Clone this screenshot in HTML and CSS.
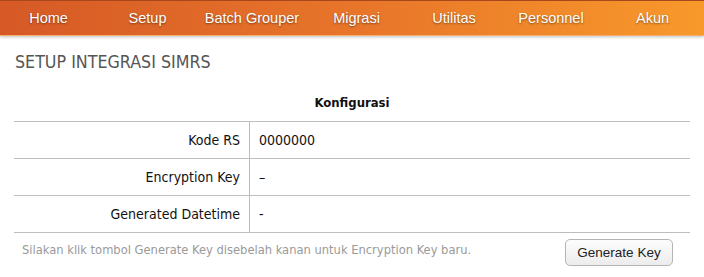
FILE: index.html
```html
<!DOCTYPE html>
<html lang="id">
<head>
<meta charset="UTF-8">
<meta name="viewport" content="width=device-width, initial-scale=1.0">
<title>Setup Integrasi SIMRS</title>
<link rel="stylesheet" href="styles.css">
</head>
<body>

<ul class="menu">
  <li><a href="#">Home</a></li>
  <li><a href="#">Setup</a></li>
  <li><a href="#">Batch Grouper</a></li>
  <li><a href="#">Migrasi</a></li>
  <li><a href="#">Utilitas</a></li>
  <li><a href="#">Personnel</a></li>
  <li><a href="#">Akun</a></li>
</ul>

<div class="content">
  <h2>SETUP INTEGRASI SIMRS</h2>

  <table class="grid">
    <tr>
      <th colspan="2">Konfigurasi</th>
    </tr>
    <tr>
      <td class="label">Kode RS</td>
      <td>0000000</td>
    </tr>
    <tr>
      <td class="label">Encryption Key</td>
      <td>&ndash;</td>
    </tr>
    <tr>
      <td class="label">Generated Datetime</td>
      <td>-</td>
    </tr>
  </table>

  <div class="footer">
    <span class="hint">Silakan klik tombol Generate Key disebelah kanan untuk Encryption Key baru.</span>
    <button>Generate Key</button>
  </div>
</div>

</body>
</html>
```

FILE: styles.css
```css
body {
  margin: 0;
  background: #fff;
  font-family: "DejaVu Sans Condensed", "DejaVu Sans", sans-serif;
  font-size: 13px;
  color: #111;
}

.menu {
  list-style: none;
  margin: 0;
  padding: 0;
  height: 34px;
  display: grid;
  grid-template-columns: 97px 101px 108px 101px 94px 100px 103px;
  align-items: center;
  background: linear-gradient(to right, #d65926, #e9782a 55%, #f8992b);
  border-top: 1px solid #a8461c;
  border-bottom: 1px solid #f3b070;
  box-shadow: 0 1px 3px rgba(0,0,0,0.25);
}

.menu li {
  text-align: center;
}

.menu a {
  font-family: "Liberation Sans", Arial, sans-serif;
  font-size: 14.5px;
  color: #fff;
  text-decoration: none;
  text-shadow: 0 1px 2px rgba(0,0,0,0.45);
}

.content {
  padding: 0 14px;
}

h2 {
  margin: 16px 0 0 1px;
  font-size: 17.7px;
  font-weight: normal;
  color: #555;
}

.grid {
  width: 100%;
  margin-top: 11px;
  border-collapse: collapse;
}

.grid th {
  height: 36px;
  font-size: 13px;
  font-weight: bold;
  border-bottom: 1px solid #bdbdbd;
}

.grid td {
  height: 36px;
  padding: 0 9px;
  font-size: 14px;
  border-bottom: 1px solid #bdbdbd;
}

.grid td.label {
  width: 217px;
  text-align: right;
  border-right: 1px solid #bdbdbd;
}

.footer {
  display: flex;
  align-items: flex-start;
  justify-content: space-between;
  padding: 6px 17px 0 8px;
}

.hint {
  padding-top: 3px;
  color: #9a9a9a;
  font-size: 12.8px;
}

button {
  font-family: "Liberation Sans", Arial, sans-serif;
  font-size: 13.5px;
  color: #222;
  width: 108px;
  height: 27px;
  border: 1px solid #b4b4b4;
  border-radius: 5px;
  background: linear-gradient(#fdfdfd, #ececec);
  cursor: pointer;
}
```
